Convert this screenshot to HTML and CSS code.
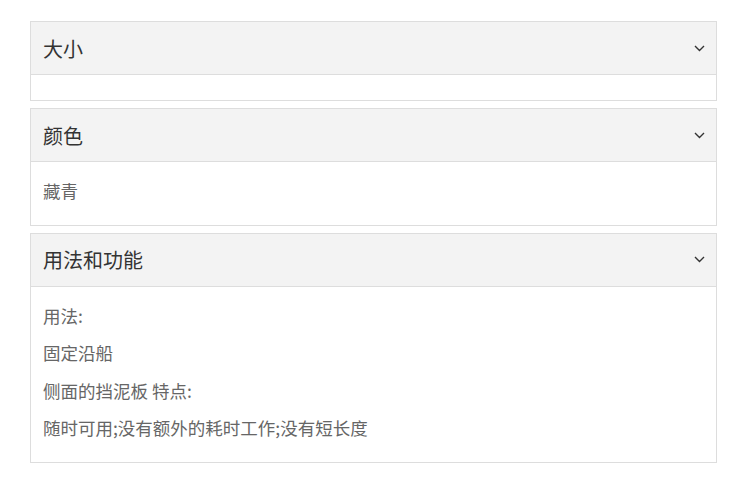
FILE: index.html
```html
<!DOCTYPE html>
<html lang="zh">
<head>
<meta charset="utf-8">
<link rel="stylesheet" href="styles.css">
</head>
<body>
<div class="page">
  <section class="panel">
    <div class="panel-head"><span>大小</span><svg class="chev" width="11" height="7" viewBox="0 0 11 7"><path d="M1 1l4.5 4.5L10 1" fill="none" stroke="#333" stroke-width="1.4"/></svg></div>
    <div class="panel-body empty"></div>
  </section>
  <section class="panel">
    <div class="panel-head"><span>颜色</span><svg class="chev" width="11" height="7" viewBox="0 0 11 7"><path d="M1 1l4.5 4.5L10 1" fill="none" stroke="#333" stroke-width="1.4"/></svg></div>
    <div class="panel-body"><p>藏青</p></div>
  </section>
  <section class="panel">
    <div class="panel-head"><span>用法和功能</span><svg class="chev" width="11" height="7" viewBox="0 0 11 7"><path d="M1 1l4.5 4.5L10 1" fill="none" stroke="#333" stroke-width="1.4"/></svg></div>
    <div class="panel-body">
      <p>用法:</p>
      <p>固定沿船</p>
      <p>侧面的挡泥板 特点:</p>
      <p>随时可用;没有额外的耗时工作;没有短长度</p>
    </div>
  </section>
</div>
</body>
</html>
```

FILE: styles.css
```css
html, body { margin: 0; padding: 0; background: #fff; }
body { font-family: "Noto Sans CJK SC", "Noto Sans", sans-serif; }
.page {
  width: 687px;
  padding: 21px 0 0 30px;
  display: flex;
  flex-direction: column;
  gap: 7px;
}
.panel {
  border: 1px solid #dddddd;
  background: #fff;
}
.panel-head {
  height: 52px;
  background: #f3f3f3;
  border-bottom: 1px solid #dddddd;
  display: flex;
  align-items: center;
  justify-content: space-between;
  padding: 0 11px 0 12px;
  font-size: 20px;
  color: #333;
}
.chev { display: block; }
.panel-body {
  padding: 10px 12px 15px;
  font-size: 17.5px;
  color: #666;
}
.panel-body.empty { height: 0; }
.panel-body p {
  margin: 0;
  line-height: 37.5px;
}
```
